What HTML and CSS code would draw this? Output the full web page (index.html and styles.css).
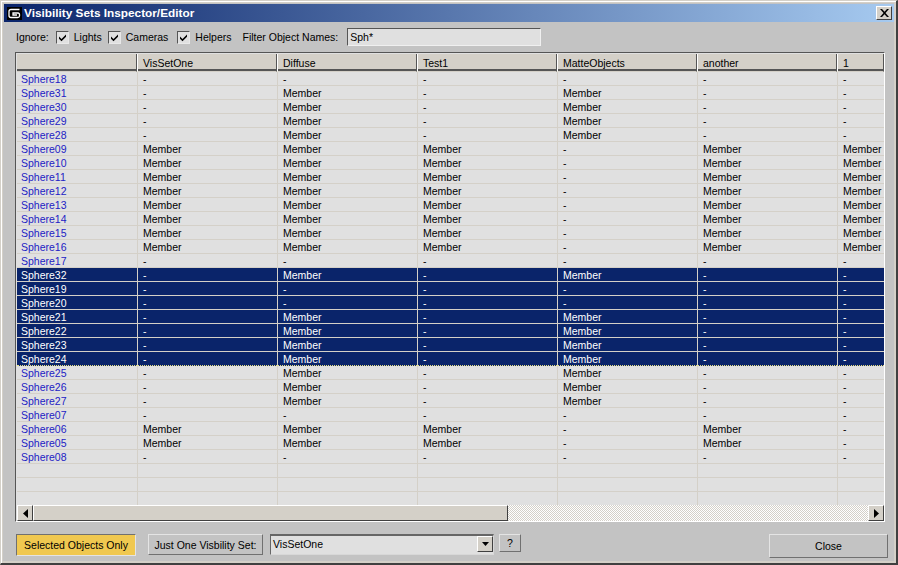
FILE: index.html
```html
<!DOCTYPE html>
<html lang="en">
<head>
    <meta charset="UTF-8">
    <title>Visibility Sets Inspector/Editor</title>
    <link rel="stylesheet" href="styles.css">
</head>
<body>

<div class="window">
    <div class="titlebar">
        <svg class="app-icon" width="15" height="13" viewBox="0 0 15 13">
            <rect width="15" height="13" fill="#000"/>
            <path d="M12.500 2.500H4Q2 2.500 2 4.500V8.500Q2 10.500 4 10.500H10.500Q12.500 10.500 12.500 9V7.500Q12.500 6 11 6H6V8H10" fill="none" stroke="#fff" stroke-width="1.300"/>
        </svg>
        <span class="title">Visibility Sets Inspector/Editor</span>
        <button class="close-x" type="button">
            <svg width="9" height="8" viewBox="0 0 9 8"><path d="M0 0H2L4.500 2.800 7 0H9L5.500 4 9 8H7L4.500 5.200 2 8H0L3.500 4Z" fill="#000"/></svg>
        </button>
    </div>

    <div class="filters">
        <span class="lbl-ignore">Ignore:</span>
        <label class="chk"><span class="box"><svg width="9" height="9" viewBox="0 0 9 9"><path d="M1 3.500L3.500 6 8 1.500V3.800L3.500 8.300 1 5.800Z" fill="#000"/></svg></span>Lights</label>
        <label class="chk"><span class="box"><svg width="9" height="9" viewBox="0 0 9 9"><path d="M1 3.500L3.500 6 8 1.500V3.800L3.500 8.300 1 5.800Z" fill="#000"/></svg></span>Cameras</label>
        <label class="chk"><span class="box"><svg width="9" height="9" viewBox="0 0 9 9"><path d="M1 3.500L3.500 6 8 1.500V3.800L3.500 8.300 1 5.800Z" fill="#000"/></svg></span>Helpers</label>
        <span class="lbl-filter">Filter Object Names:</span>
        <div class="filter-input">Sph*</div>
    </div>

    <div class="grid-frame">
        <div class="grid-scroll">
            <table class="grid">
                <colgroup>
                    <col class="c-name"><col class="c-set"><col class="c-set"><col class="c-set"><col class="c-set"><col class="c-set"><col class="c-last">
                </colgroup>
                <thead>
                    <tr><th></th><th>VisSetOne</th><th>Diffuse</th><th>Test1</th><th>MatteObjects</th><th>another</th><th>1</th></tr>
                </thead>
                <tbody>
                    <tr><td>Sphere18</td><td>-</td><td>-</td><td>-</td><td>-</td><td>-</td><td>-</td></tr>
                    <tr><td>Sphere31</td><td>-</td><td>Member</td><td>-</td><td>Member</td><td>-</td><td>-</td></tr>
                    <tr><td>Sphere30</td><td>-</td><td>Member</td><td>-</td><td>Member</td><td>-</td><td>-</td></tr>
                    <tr><td>Sphere29</td><td>-</td><td>Member</td><td>-</td><td>Member</td><td>-</td><td>-</td></tr>
                    <tr><td>Sphere28</td><td>-</td><td>Member</td><td>-</td><td>Member</td><td>-</td><td>-</td></tr>
                    <tr><td>Sphere09</td><td>Member</td><td>Member</td><td>Member</td><td>-</td><td>Member</td><td>Member</td></tr>
                    <tr><td>Sphere10</td><td>Member</td><td>Member</td><td>Member</td><td>-</td><td>Member</td><td>Member</td></tr>
                    <tr><td>Sphere11</td><td>Member</td><td>Member</td><td>Member</td><td>-</td><td>Member</td><td>Member</td></tr>
                    <tr><td>Sphere12</td><td>Member</td><td>Member</td><td>Member</td><td>-</td><td>Member</td><td>Member</td></tr>
                    <tr><td>Sphere13</td><td>Member</td><td>Member</td><td>Member</td><td>-</td><td>Member</td><td>Member</td></tr>
                    <tr><td>Sphere14</td><td>Member</td><td>Member</td><td>Member</td><td>-</td><td>Member</td><td>Member</td></tr>
                    <tr><td>Sphere15</td><td>Member</td><td>Member</td><td>Member</td><td>-</td><td>Member</td><td>Member</td></tr>
                    <tr><td>Sphere16</td><td>Member</td><td>Member</td><td>Member</td><td>-</td><td>Member</td><td>Member</td></tr>
                    <tr><td>Sphere17</td><td>-</td><td>-</td><td>-</td><td>-</td><td>-</td><td>-</td></tr>
                    <tr class="sel"><td>Sphere32</td><td>-</td><td>Member</td><td>-</td><td>Member</td><td>-</td><td>-</td></tr>
                    <tr class="sel"><td>Sphere19</td><td>-</td><td>-</td><td>-</td><td>-</td><td>-</td><td>-</td></tr>
                    <tr class="sel"><td>Sphere20</td><td>-</td><td>-</td><td>-</td><td>-</td><td>-</td><td>-</td></tr>
                    <tr class="sel"><td>Sphere21</td><td>-</td><td>Member</td><td>-</td><td>Member</td><td>-</td><td>-</td></tr>
                    <tr class="sel"><td>Sphere22</td><td>-</td><td>Member</td><td>-</td><td>Member</td><td>-</td><td>-</td></tr>
                    <tr class="sel"><td>Sphere23</td><td>-</td><td>Member</td><td>-</td><td>Member</td><td>-</td><td>-</td></tr>
                    <tr class="sel focus"><td>Sphere24</td><td>-</td><td>Member</td><td>-</td><td>Member</td><td>-</td><td>-</td></tr>
                    <tr><td>Sphere25</td><td>-</td><td>Member</td><td>-</td><td>Member</td><td>-</td><td>-</td></tr>
                    <tr><td>Sphere26</td><td>-</td><td>Member</td><td>-</td><td>Member</td><td>-</td><td>-</td></tr>
                    <tr><td>Sphere27</td><td>-</td><td>Member</td><td>-</td><td>Member</td><td>-</td><td>-</td></tr>
                    <tr><td>Sphere07</td><td>-</td><td>-</td><td>-</td><td>-</td><td>-</td><td>-</td></tr>
                    <tr><td>Sphere06</td><td>Member</td><td>Member</td><td>Member</td><td>-</td><td>Member</td><td>-</td></tr>
                    <tr><td>Sphere05</td><td>Member</td><td>Member</td><td>Member</td><td>-</td><td>Member</td><td>-</td></tr>
                    <tr><td>Sphere08</td><td>-</td><td>-</td><td>-</td><td>-</td><td>-</td><td>-</td></tr>
                    <tr><td></td><td></td><td></td><td></td><td></td><td></td><td></td></tr>
                    <tr><td></td><td></td><td></td><td></td><td></td><td></td><td></td></tr>
                    <tr><td></td><td></td><td></td><td></td><td></td><td></td><td></td></tr>
                </tbody>
            </table>
        </div>
        <div class="hscroll">
            <div class="sb-btn"><svg width="5" height="9" viewBox="0 0 5 9"><path d="M5 0V9L0 4.500Z" fill="#000"/></svg></div>
            <div class="sb-thumb"></div>
            <div class="sb-track"></div>
            <div class="sb-btn"><svg width="5" height="9" viewBox="0 0 5 9"><path d="M0 0V9L5 4.500Z" fill="#000"/></svg></div>
        </div>
    </div>

    <div class="footer">
        <button class="btn btn-selected" type="button">Selected Objects Only</button>
        <button class="btn btn-oneset" type="button">Just One Visbility Set:</button>
        <div class="combo">
            <span class="combo-text">VisSetOne</span>
            <span class="combo-arrow"><svg width="7" height="4" viewBox="0 0 7 4"><path d="M0 0H7L3.500 4Z" fill="#000"/></svg></span>
        </div>
        <button class="btn btn-help" type="button">?</button>
        <button class="btn btn-close" type="button">Close</button>
    </div>
</div>

</body>
</html>
```

FILE: styles.css
```css
* {
    box-sizing: border-box;
}
html, body {
    margin: 0;
    padding: 0;
    background: #c3c3c3;
}
body {
    font-family: "Liberation Sans", Arial, sans-serif;
    font-size: 10.5px;
    color: #000;
}
.window {
    width: 898px;
    height: 565px;
    display: flex;
    flex-direction: column;
    background: #c3c3c3;
    padding: 3px 2px 0 3px;
    border-style: solid;
    border-width: 1px 2px 2px 1px;
    border-color: #d4d0c8 #404040 #404040 #d4d0c8;
    box-shadow: inset 1px 1px 0 #fff, inset 2px 2px 0 #d4d0c8, inset -1px -1px 0 #d4d0c8, inset -2px -2px 0 #d4d0c8;
}

/* Title bar */
.titlebar {
    height: 18px;
    flex: none;
    display: flex;
    align-items: center;
    padding: 0 2px 0 3px;
    background: linear-gradient(to right, #0a246a, #a6caf0);
}
.app-icon {
    flex: none;
}
.title {
    margin-left: 2px;
    color: #fff;
    font-weight: bold;
    font-size: 11.8px;
}
.close-x {
    margin-left: auto;
    width: 16px;
    height: 14px;
    padding: 0;
    display: flex;
    align-items: center;
    justify-content: center;
    background: #d4d0c8;
    border: 1px solid;
    border-color: #fff #404040 #404040 #fff;
}

/* Filter row */
.filters {
    height: 30px;
    flex: none;
    display: flex;
    align-items: center;
    padding-left: 12px;
}
.chk {
    display: flex;
    align-items: center;
}
.box {
    width: 13px;
    height: 13px;
    margin-right: 5px;
    display: flex;
    align-items: center;
    justify-content: center;
    background: #e0e0e0;
    border: 1px solid;
    border-color: #555 #e8e8e8 #e8e8e8 #555;
}
.lbl-ignore {
    margin-right: 7px;
}
.chk + .chk {
    margin-left: 6px;
}
.chk + .chk + .chk {
    margin-left: 9px;
}
.lbl-filter {
    margin-left: 11px;
    margin-right: 9px;
}
.filter-input {
    width: 194px;
    height: 18px;
    padding: 1px 2px;
    line-height: 14px;
    background: #e0e0e0;
    border: 1px solid;
    border-color: #555 #f0f0f0 #f0f0f0 #555;
}

/* Grid */
.grid-frame {
    width: 870px;
    height: 470px;
    margin-left: 11px;
    flex: none;
    display: flex;
    flex-direction: column;
    border: 1px solid;
    border-color: #555 #fff #fff #555;
    background: #e0e0e0;
    padding: 1px 0 0 1px;
}
.grid-scroll {
    flex: 1;
    overflow: hidden;
}
.grid {
    table-layout: fixed;
    width: 867px;
    border-collapse: separate;
    border-spacing: 0;
}
.c-name {
    width: 120px;
}
.c-set {
    width: 140px;
}
.c-last {
    width: 47px;
}
.grid th {
    height: 18px;
    padding: 0 0 0 5px;
    text-align: left;
    font-weight: normal;
    background: #d4d0c8;
    border-left: 1px solid #fff;
    border-right: 1px solid #555;
    border-bottom: 1px solid #d4d0c8;
    box-shadow: inset 0 -2px 0 #555;
    white-space: nowrap;
}
.grid th:first-child {
    border-left: none;
}
.grid td {
    height: 14px;
    padding: 1px 0 0 5px;
    line-height: 12px;
    border-bottom: 1px solid #d4d0c8;
    border-left: 1px solid #d4d0c8;
    white-space: nowrap;
}
.grid td:first-child {
    padding-left: 4px;
    border-left: none;
    color: #2222c4;
}
.grid .sel td {
    background: #0a246a;
    color: #fff;
}
.grid .focus td {
    border-bottom: 1px dotted #e8e080;
}

/* Scrollbar */
.hscroll {
    height: 16px;
    flex: none;
    display: flex;
}
.sb-btn {
    width: 16px;
    display: flex;
    align-items: center;
    justify-content: center;
    background: #d4d0c8;
    border: 1px solid;
    border-color: #fff #404040 #404040 #fff;
}
.sb-thumb {
    width: 475px;
    background: #d4d0c8;
    border: 1px solid;
    border-color: #fff #404040 #404040 #fff;
}
.sb-track {
    flex: 1;
    background: repeating-conic-gradient(#d4d0c8 0 25%, #fff 0 50%) 0 0 / 2px 2px;
}

/* Bottom buttons */
.footer {
    flex: 1;
    display: flex;
    align-items: flex-start;
    padding: 12px 6px 0 12px;
}
.btn {
    font: inherit;
    color: #000;
    padding: 0;
    background: #c3c3c3;
    border: 1px solid;
    border-color: #e4e4e4 #707070 #707070 #e4e4e4;
}
.btn-selected {
    width: 120px;
    height: 22px;
    background: #f0c850;
    border-color: #707070 #e4e4e4 #e4e4e4 #707070;
}
.btn-oneset {
    width: 115px;
    height: 21px;
    margin-left: 12px;
}
.combo {
    width: 224px;
    height: 21px;
    margin-left: 7px;
    display: flex;
    align-items: flex-start;
    background: #e0e0e0;
    border-style: solid;
    border-width: 2px 1px 1px 1px;
    border-color: #666 #d8d8d8 #d8d8d8 #666;
}
.combo-text {
    flex: 1;
    padding: 2px 0 0 2px;
}
.combo-arrow {
    width: 16px;
    height: 16px;
    display: flex;
    align-items: center;
    justify-content: center;
    background: #d4d0c8;
    border: 1px solid;
    border-color: #fff #404040 #404040 #fff;
}
.btn-help {
    width: 22px;
    height: 18px;
    margin-left: 5px;
}
.btn-close {
    width: 119px;
    height: 24px;
    margin-left: auto;
}
```
